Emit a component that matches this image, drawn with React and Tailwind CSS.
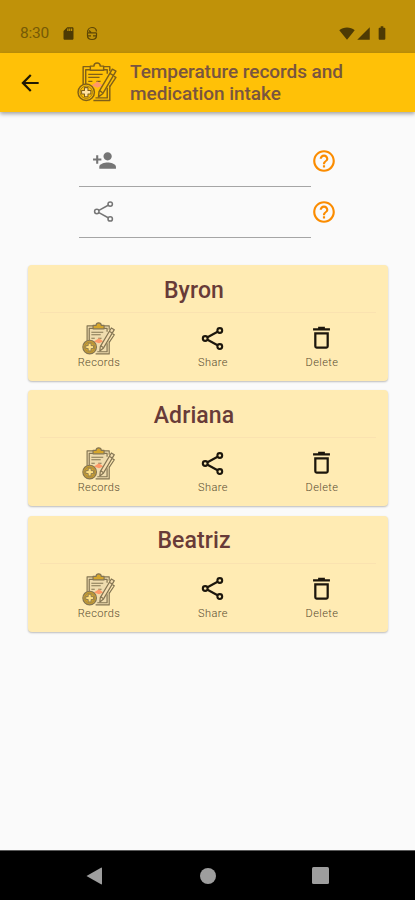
import React from "react";
import {
  MdArrowBack,
  MdBatteryFull,
  MdHelpOutline,
  MdPersonAdd,
  MdSdCard,
  MdSignalCellular4Bar,
} from "react-icons/md";

const people = [
  { id: 1, name: "Byron" },
  { id: 2, name: "Adriana" },
  { id: 3, name: "Beatriz" },
];

export default function App() {
  return (
    <div className="flex h-[900px] w-[415px] flex-col overflow-hidden bg-[#fafafa] font-['Roboto',sans-serif]">
      <StatusBar />
      <AppBar />

      <main className="flex-1">
        <div className="ml-[79px] pt-[24px]">
          <FieldRow icon={<MdPersonAdd size={25} />} />
          <FieldRow icon={<ShareIcon className="size-[23px]" strokeWidth="1.6" />} />
        </div>

        <div className="mt-[27px] ml-[28px] flex w-[360px] flex-col gap-[9.3px]">
          {people.map((person) => (
            <PersonCard key={person.id} name={person.name} />
          ))}
        </div>
      </main>

      <NavBar />
    </div>
  );
}

function StatusBar() {
  return (
    <div className="flex h-[53px] shrink-0 items-start justify-between bg-[#c09209] pt-[25px] pr-[24px] pl-[20px] text-[#4d3a04]">
      <div className="flex h-[16px] items-center">
        <span className="w-[41px] text-[15.5px] leading-[16px] tracking-[-0.2px] text-[#765a06]">8:30</span>
        <MdSdCard size={15} />
        {/* debug bug */}
        <svg width="12" height="15" viewBox="0 0 12 15" className="ml-[10px]" fill="none" stroke="#5c4505" strokeWidth="1.2">
          <path d="M1.500 6.500C1.500 3.500 3.500 1.500 6 1.500s4.300 1.500 4.500 4M1.500 6.800h9M3 4.500 5 6.500M1.500 9.800h3.500M7 9.800h3.500M1.500 6.800v3C1.500 12 3.500 13.500 6 13.500s4.500-1.500 4.500-3.700v-3" />
        </svg>
      </div>
      <div className="flex h-[16px] items-center">
        <svg width="16" height="13" viewBox="0 0 16 13" fill="currentColor">
          <path d="M8 12.700.3 3.300C4.500-.3 11.500-.3 15.700 3.300Z" />
        </svg>
        <MdSignalCellular4Bar size={15} className="ml-px" />
        <MdBatteryFull size={16} className="ml-[2px] w-[18px]" />
      </div>
    </div>
  );
}

function AppBar() {
  return (
    <header className="z-10 flex h-[59px] shrink-0 items-center bg-[#ffc107] pl-[17px] shadow-[0_2px_4px_rgba(0,0,0,0.35)]">
      <MdArrowBack size={26} className="text-[#1f1803]" />
      <ClipboardIcon className="ml-[34px] size-[41px]" />
      <h1 className="ml-[12px] text-[19px] leading-[22px] font-medium tracking-[-0.04px] text-[#79553f]">
        Temperature records and
        <br />
        medication intake
      </h1>
    </header>
  );
}

function FieldRow({ icon }) {
  return (
    <div className="flex h-[51px] items-center">
      <div className="flex h-[51px] w-[232px] items-center border-b border-[#a5a5a5] pb-[1px] pl-[13px] text-[#757575]">
        {icon}
      </div>
      <MdHelpOutline size={26} className="mb-[2px] text-[#fb8c00]" />
    </div>
  );
}

function PersonCard({ name }) {
  return (
    <section className="h-[116px] rounded-[4px] bg-[#ffebb3] px-[12px] shadow-[0_1px_2px_rgba(0,0,0,0.25)]">
      <div className="flex h-[48px] items-center justify-center border-b border-[#fae2b0] pt-[4px] pr-[28px]">
        <h2 className="text-[23px] leading-[28px] font-medium tracking-[0.1px] text-[#683b38]">{name}</h2>
      </div>
      <div className="flex pt-[9px]">
        <CardAction label="Records" className="w-[60px] ml-[29px]">
          <ClipboardIcon filled className="size-[34px]" />
        </CardAction>
        <CardAction label="Share" className="ml-[54px] w-[60px]">
          <ShareIcon className="mr-[2px] mb-[2px] size-[25px]" strokeWidth="2" />
        </CardAction>
        <CardAction label="Delete" className="ml-[49px] w-[60px]">
          <svg viewBox="0 0 24 24" className="mr-px mb-[3px] size-[27px]" fill="none" stroke="currentColor" strokeWidth="2">
            <path d="M4.500 4.800h15M9 3.500h6" />
            <path d="M6.500 8.300h11v11.500q0 1.200-1.200 1.200H7.700q-1.200 0-1.200-1.200Z" />
          </svg>
        </CardAction>
      </div>
    </section>
  );
}

function CardAction({ label, className, children }) {
  return (
    <div className={`flex flex-col items-center text-[#1c160c] ${className}`}>
      <div className="flex h-[34px] items-center">{children}</div>
      <span className="text-[11px] leading-[14px] font-light tracking-[0.42px] text-[#574a2f]">{label}</span>
    </div>
  );
}

function ShareIcon({ className, strokeWidth }) {
  return (
    <svg viewBox="0 0 24 24" className={className} fill="none" stroke="currentColor" strokeWidth={strokeWidth}>
      <circle cx="5" cy="12" r="2.300" />
      <circle cx="19" cy="4.300" r="2.300" />
      <circle cx="19" cy="19.700" r="2.300" />
      <path d="m7.200 10.800 9.700-5.300M7.200 13.200l9.700 5.300" />
    </svg>
  );
}

function ClipboardIcon({ filled, className }) {
  const line = filled ? "#847553" : "#806018";
  const paper = filled ? "#efdcae" : "none";
  const gold = filled ? "#d5a62d" : "#ffc107";
  return (
    <svg viewBox="0 0 40 40" className={className} fill="none" stroke={line} strokeWidth="1.4" strokeLinejoin="round">
      <path d="M6 5h25v32H16V22H6Z" fill={paper} stroke="none" />
      <path d="M13 4.500H6V22M8.500 22V7.500H13M26 4.500h6V9M26 7.500h3.500v4M32 23v14.500H16M29.500 25v10H18" />
      <path d="M13 8V4h3.500c.2-4 6-4 6.200 0H26v4Z" fill={gold} />
      <path d="M11 12h14M11 15h11M11 19h4M19 19h4" strokeWidth="1.200" />
      <path d="m14 23 6-4 5 4-5 2Z" fill="#ff9868" stroke="none" />
      <path d="m34.500 7 3.500 2-13 22-4 3 .5-5Z" fill={filled ? "#f5deb0" : "#ffc107"} />
      <path d="m32 11 3.500 2M22 28l3 2M36 14l2 1-6 9" />
      <circle cx="9" cy="29.500" r="8" fill={gold} />
      <circle cx="9" cy="29.500" r="6" strokeWidth=".7" />
      <path
        d="M7.300 25h3.400v2.800h2.800v3.400h-2.800V34H7.300v-2.800H4.500v-3.400h2.800Z"
        fill={filled ? "#ffe083" : "#ffe2a0"}
        strokeWidth="1"
      />
    </svg>
  );
}

function NavBar() {
  return (
    <nav className="flex h-[50px] shrink-0 items-center justify-between border-t border-[#5a5a5a] bg-black pr-[86px] pl-[86px] text-[#9e9e9e]">
      <svg width="17" height="18" viewBox="0 0 17 18" fill="currentColor">
        <path d="M.5 9 15 .7q1-.5 1 .6v15.400q0 1.100-1 .6Z" />
      </svg>
      <div className="size-[16px] rounded-full bg-[#9e9e9e]" />
      <div className="size-[17px] rounded-[1.5px] bg-[#9e9e9e]" />
    </nav>
  );
}
